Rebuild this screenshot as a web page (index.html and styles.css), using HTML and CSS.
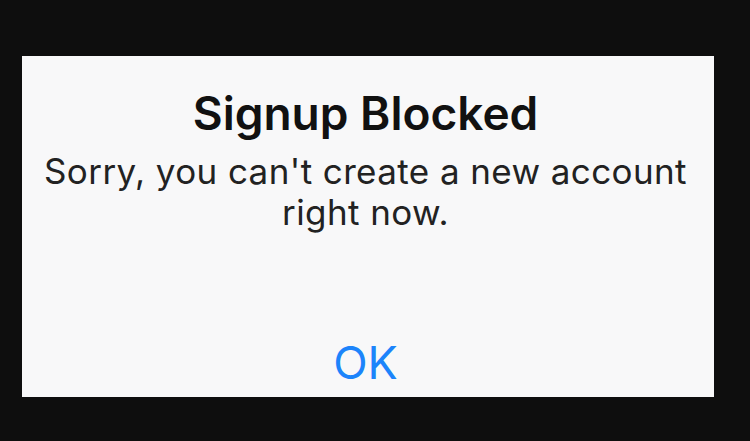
FILE: index.html
```html
<!DOCTYPE html>
<html>
<head>
<meta charset="utf-8">
<link rel="stylesheet" href="styles.css">
</head>
<body>
<div class="stage">
  <div class="dialog">
    <div class="content">
      <h1 class="title">Signup Blocked</h1>
      <p class="message">Sorry, you can't create a new account right now.</p>
    </div>
    <div class="actions">
      <span class="ok">OK</span>
    </div>
  </div>
</div>
</body>
</html>
```

FILE: styles.css
```css
html, body {
  margin: 0;
  padding: 0;
  background: #0e0e0e;
}
.stage {
  width: 750px;
  height: 441px;
  padding: 56px 0 0 22px;
  box-sizing: border-box;
}
.dialog {
  width: 692px;
  height: 341px;
  padding-right: 5px;
  box-sizing: border-box;
  background: #f8f8f9;
  display: flex;
  flex-direction: column;
  align-items: center;
  font-family: Inter, "Liberation Sans", Arial, sans-serif;
}
.content {
  display: flex;
  flex-direction: column;
  align-items: center;
  padding-top: 29px;
}
.title {
  margin: 0;
  font-size: 46px;
  line-height: 56px;
  font-weight: 600;
  color: #111;
}
.message {
  margin: 10px 0 0;
  width: 680px;
  font-size: 35px;
  line-height: 41px;
  letter-spacing: 0.4px;
  text-align: center;
  color: #222;
}
.actions {
  margin-top: auto;
  padding-bottom: 6px;
}
.ok {
  display: block;
  font-size: 45px;
  line-height: 56px;
  color: #1c84fb;
}
```
